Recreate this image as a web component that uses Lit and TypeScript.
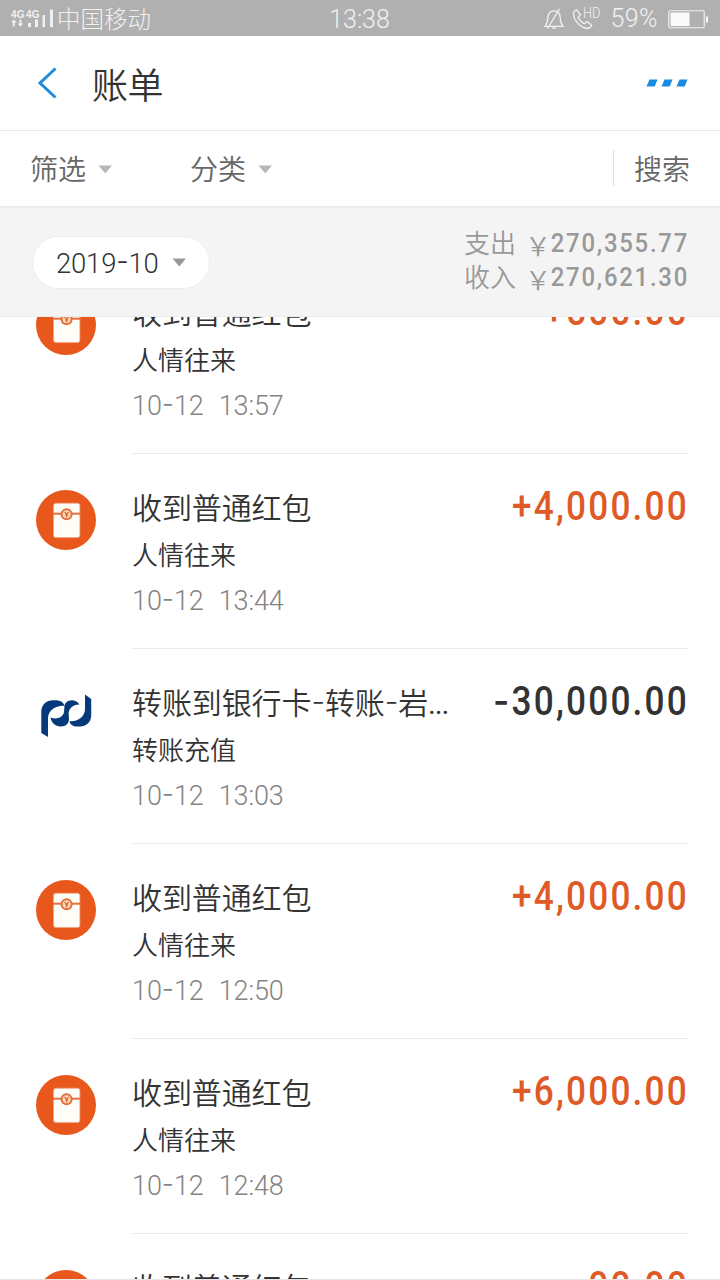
import { LitElement, html, css, svg } from "lit";
import { customElement, property } from "lit/decorators.js";

interface Entry {
  kind: "packet" | "bank";
  title: string;
  category: string;
  date: string;
  time: string;
  amount: string;
}

const ENTRIES: Entry[] = [
  { kind: "packet", title: "收到普通红包", category: "人情往来", date: "10-12", time: "13:57", amount: "+500.00" },
  { kind: "packet", title: "收到普通红包", category: "人情往来", date: "10-12", time: "13:44", amount: "+4,000.00" },
  { kind: "bank", title: "转账到银行卡-转账-岩...", category: "转账充值", date: "10-12", time: "13:03", amount: "-30,000.00" },
  { kind: "packet", title: "收到普通红包", category: "人情往来", date: "10-12", time: "12:50", amount: "+4,000.00" },
  { kind: "packet", title: "收到普通红包", category: "人情往来", date: "10-12", time: "12:48", amount: "+6,000.00" },
  { kind: "packet", title: "收到普通红包", category: "人情往来", date: "10-12", time: "12:45", amount: "00.00" },
];

// Hyphens and dots get their own spans so their advance can be tuned.
const spaced = (text: string) =>
  text.split(/(-|\.\.\.)/).map((part) =>
    part === "-"
      ? html`<span class="dash">-</span>`
      : part === "..."
        ? html`<span class="dots">...</span>`
        : part
  );

const packetIcon = svg`
  <svg width="60" height="60" viewBox="0 0 60 60">
    <circle cx="30" cy="30" r="30" fill="#e8581c"/>
    <rect x="17.500" y="13.200" width="26.400" height="34.400" rx="2.500" fill="#fffdf8" stroke="#f3a27c" stroke-width=".8"/>
    <path d="M17 23.700H44.300" stroke="#e8703c" stroke-width="2"/>
    <circle cx="30.600" cy="24.300" r="6" fill="#e2703f"/>
    <circle cx="30.600" cy="24.300" r="4" fill="#fbdcb8"/>
    <path d="M28.500 21.800l2.100 2.400 2.100-2.400M30.600 24.200v3.200M29 25h3.200" fill="none" stroke="#e2612c" stroke-width="1.100"/>
  </svg>`;

const bankIcon = svg`
  <svg width="60" height="60" viewBox="0 0 60 60">
    <g fill="#06397a">
      <path d="M5.300 48V27C5.300 19.500 10.500 15.300 17 15.300H19C24.500 15.300 27.500 17.500 28.600 20.800C20 20 12 25.500 12 33V52Z"/>
      <path d="M43.500 19.500C41.500 16.500 38.500 15.300 36 15.300C31 15.300 28.300 18.500 28.300 22.500C28.300 27 28 30 24.500 32C21.500 33.800 18 33.800 14.500 32.500C15.500 38 19.500 41.500 24.500 41.500C30 41.500 33 38.500 33 34C33 29.500 32 27.500 33.800 24.300C35.500 21.300 39 19.600 43.500 19.500Z"/>
      <path d="M49 9.500L55.200 14V30C55.200 37.500 50 41.500 44 41.500H41.500C37 41.500 34.200 39.700 33.500 36.200C41.500 36.800 49 32 49 24Z"/>
    </g>
  </svg>`;

@customElement("bill-row")
class BillRow extends LitElement {
  @property({ attribute: false }) entry!: Entry;

  static styles = css`
    :host {
      display: grid;
      grid-template-columns: 60px 1fr;
      column-gap: 36px;
      height: 195px;
      padding: 0 32px 0 36px;
      box-sizing: border-box;
      flex: none;
    }
    .icon { padding-top: 36px; height: 60px; }
    .icon svg { display: block; }
    .body {
      border-bottom: 1px solid #ececec;
      padding-top: 35px;
      display: flex;
      flex-direction: column;
      color: #333;
      white-space: pre;
    }
    .head { display: flex; justify-content: space-between; height: 40px; line-height: 40px; }
    .title { font-size: 30px; letter-spacing: -0.1px; }
    .category { font-size: 26px; height: 36px; line-height: 36px; margin-top: 9px; }
    .when {
      display: flex;
      gap: 15px;
      font-size: 27px;
      font-weight: 300;
      letter-spacing: -0.1px;
      color: #848484;
      height: 34px;
      line-height: 34px;
      margin-top: 10px;
    }
    .amount {
      font-size: 40px;
      font-weight: 500;
      color: #de5a26;
      line-height: 36px;
      letter-spacing: 2.500px;
      margin-right: -1px;
      transform: scaleX(0.88);
      transform-origin: right;
      width: 176px;
      display: flex;
      justify-content: flex-end;
    }
    .out { color: #333; }
    .dash { font-family: Inter, sans-serif; line-height: 1; vertical-align: 2px; }
    .amount .dash { line-height: 34px; }
    .dots { letter-spacing: -1.200px; font-weight: 400; }
  `;

  render() {
    const e = this.entry;
    return html`
      <div class="icon">${e.kind === "packet" ? packetIcon : bankIcon}</div>
      <div class="body">
        <div class="head"><span class="title">${spaced(e.title)}</span><span class="amount ${e.amount[0] === "-" ? "out" : ""}">${spaced(e.amount)}</span></div>
        <div class="category">${e.category}</div>
        <div class="when"><span>${spaced(e.date)}</span><span>${e.time}</span></div>
      </div>`;
  }
}

@customElement("app-root")
class AppRoot extends LitElement {
  static styles = css`
    :host {
      display: flex;
      flex-direction: column;
      width: 720px;
      height: 1280px;
      overflow: hidden;
      background: #fff;
      box-sizing: border-box;
      border-bottom: 1px solid #e6e6e6;
      font-family: Roboto, "Noto Sans CJK SC", sans-serif;
      font-weight: 350;
      color: #333;
      white-space: nowrap;
    }
    svg { display: block; flex: none; }
    .status {
      height: 36px;
      flex: none;
      background: #b0b0b0;
      color: #f0f0f0;
      display: grid;
      grid-template-columns: 1fr auto 1fr;
      align-items: center;
      font-size: 24px;
      font-weight: 300;
      padding: 0 11px 0 10px;
      line-height: 36px;
    }
    .carrier { display: flex; align-items: center; gap: 3px; font-size: 23.500px; }
    .carrier span { padding-top: 2px; }
    .net { font-family: "Liberation Sans", sans-serif; font-size: 10px; font-weight: 700; }
    .clock { font-size: 25px; padding-top: 2px; }
    .indicators { display: flex; align-items: center; justify-content: flex-end; }
    .phone { margin-left: 8px; }
    .hd { font-size: 15px; font-weight: 350; line-height: 15px; height: 27px; margin: 0 11px 0 -10px; transform: scaleX(0.85); transform-origin: left; width: 17px; }
    .percent { font-size: 25px; margin-right: 10px; letter-spacing: 0.4px; }
    .header { height: 94px; flex: none; display: flex; align-items: center; padding: 0 32px 0 37px; border-bottom: 1px solid #e8e8e8; }
    .header h1 { margin: 0 auto 0 34px; font-size: 36px; font-weight: 350; line-height: 50px; padding-top: 8px; letter-spacing: -0.5px; }
    .filters { height: 75px; flex: none; display: flex; align-items: center; padding: 0 30px; border-bottom: 2px solid #ebebeb; font-size: 28px; color: #666; }
    .filter { display: flex; align-items: center; gap: 12px; width: 160px; line-height: 40px; }
    .label { padding-top: 5px; }
    .filter svg { margin-top: 1px; }
    .search { margin: -2px 0 0 auto; border-left: 1px solid #ddd; padding-left: 20px; height: 36px; line-height: 41px; }
    .summary { height: 108px; flex: none; display: flex; align-items: center; justify-content: space-between; padding: 0 32px; background: #f4f4f4; border-bottom: 1px solid #ebebeb; }
    .month { height: 53px; width: 178px; box-sizing: border-box; border: 1px solid #ececec; border-radius: 27px; background: #fff; display: flex; align-items: center; gap: 13px; padding: 2px 0 0 23px; font-size: 27.500px; font-weight: 350; letter-spacing: -0.2px; }
    .month svg { margin-top: -1px; }
    .dash { font-family: Inter, sans-serif; line-height: 1; vertical-align: 2px; }
    .totals { color: #999; font-size: 26px; line-height: 35px; display: grid; grid-template-columns: 52px 35px 137px; }
    .totals span { height: 35px; margin-top: -1px; }
    .yen { font-family: "Noto Sans CJK SC", sans-serif; text-align: right; }
    .totals .sum { font-weight: 500; letter-spacing: 1.900px; display: flex; justify-content: flex-end; transform: scaleX(0.92); transform-origin: right; margin: -2px -1px 0 0; }
    .list { flex: 1; min-height: 0; overflow: hidden; display: flex; flex-direction: column; }
    .scroll { display: flex; flex-direction: column; margin-top: -58px; }
  `;

  private caret(color: string) {
    return html`<svg width="15" height="9" viewBox="0 0 15 9"><path d="M.5 .5h13.500L7.300 8.500z" fill=${color} /></svg>`;
  }

  render() {
    return html`
      <div class="status">
        <div class="carrier">
          <svg width="44" height="20" viewBox="0 0 44 20" fill="#f0f0f0">
            <text class="net" x="1" y="8.500" textLength="13.500">4G</text>
            <text class="net" x="16" y="8.500" textLength="13.500">4G</text>
            <path d="M1 13.500L3.800 10.500 6.600 13.500H4.700V17.500H2.900V13.500zM7.600 14.500H9.500V10.500H11.300V14.500H13.200L10.400 17.500z" />
            <path d="M18 14h3v4h-3zM25 10.500h3V18h-3zM32.500 6h2.500v12h-2.500zM40 .5h3V18h-3z" />
          </svg>
          <span>中国移动</span>
        </div>
        <div class="clock">13:38</div>
        <div class="indicators">
          <svg width="20" height="22" viewBox="0 0 20 22" fill="none" stroke="#f0f0f0" stroke-width="1.300">
            <path d="M1 18.300H19C16.700 15.500 16.200 14 16.200 10C16.200 5.500 13.800 2.800 10 2.800C6.200 2.800 3.800 5.500 3.800 10C3.800 14 3.300 15.500 1 18.300zM8 20.200h4M15.500 .8L3.500 20.500" />
          </svg>
          <svg class="phone" width="21" height="22" viewBox="0 0 21 22" fill="none" stroke="#f0f0f0" stroke-width="1.300">
            <path d="M4.500 1.500C2.500 2.500 1.300 4 1.500 6.500C2 12.500 8.500 19.500 14.500 20.500C17 20.700 18.800 19.300 19.800 17.200L15 13.500L12.300 15.700C10 14.800 7 11.500 6.200 9.200L8.500 6.800z" />
          </svg>
          <span class="hd">HD</span>
          <span class="percent">59%</span>
          <svg width="41" height="19" viewBox="0 0 41 19">
            <rect x=".75" y=".75" width="35.500" height="17" rx="1.500" fill="none" stroke="#f0f0f0" stroke-width="1.200" />
            <path d="M2.500 2.500H21.500V16H2.500zM38 6.500h2v6h-2z" fill="#fafafa" />
          </svg>
        </div>
      </div>
      <div class="header">
        <svg width="21" height="32" viewBox="0 0 21 32"><path d="M18.500 1.500L3 16 18.500 30.500" fill="none" stroke="#1e8cdc" stroke-width="3" /></svg>
        <h1>账单</h1>
        <svg width="42" height="8" viewBox="0 0 42 8" fill="#1a8be0"><path d="M3.500 .5h8L8.700 7.500H.500zM18.500 .5h8L23.700 7.500H15.500zM33.500 .5h8L38.700 7.500H30.500z" /></svg>
      </div>
      <div class="filters">
        <div class="filter"><span class="label">筛选</span>${this.caret("#b8b8b8")}</div>
        <div class="filter"><span class="label">分类</span>${this.caret("#b8b8b8")}</div>
        <div class="search">搜索</div>
      </div>
      <div class="summary">
        <div class="month"><span>${spaced("2019-10")}</span>${this.caret("#999")}</div>
        <div class="totals">
          <span>支出</span><span class="yen">${"\uFFE5"}</span><span class="sum">270,355.77</span>
          <span>收入</span><span class="yen">${"\uFFE5"}</span><span class="sum">270,621.30</span>
        </div>
      </div>
      <div class="list"><div class="scroll">${ENTRIES.map((e) => html`<bill-row .entry=${e}></bill-row>`)}</div></div>
    `;
  }
}
